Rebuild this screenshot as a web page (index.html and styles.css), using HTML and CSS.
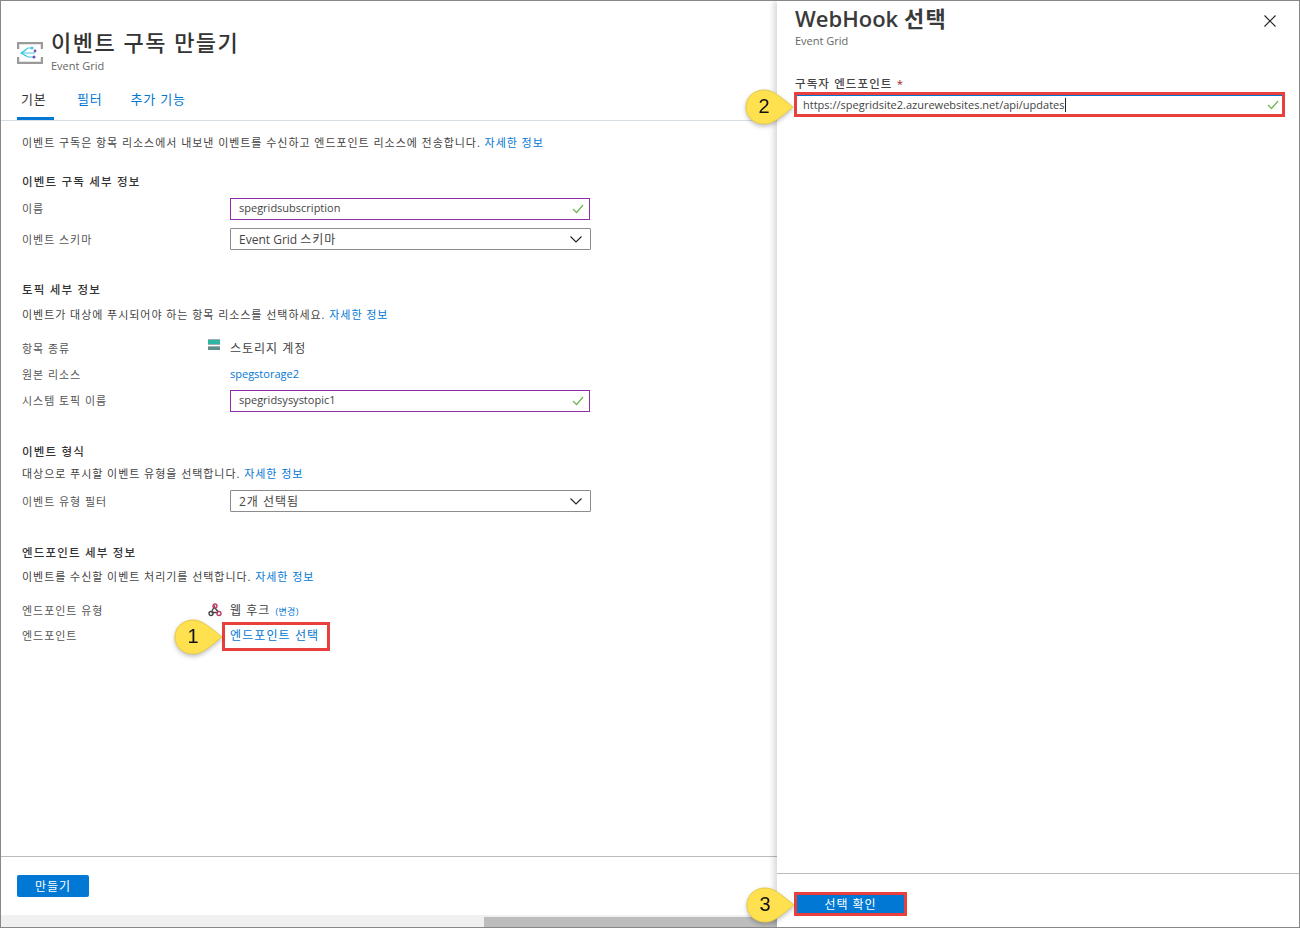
FILE: index.html
```html
<!DOCTYPE html>
<html lang="ko">
<head>
<meta charset="utf-8">
<title>이벤트 구독 만들기</title>
<link rel="stylesheet" href="styles.css">
</head>
<body>
<div class="page">
  <section class="blade">
    <header class="blade-head">
      <svg class="grid-icon" width="26" height="22" viewBox="0 0 26 22">
        <path d="M1 7V1h24v6M1 15v6h24v-6" fill="none" stroke="#9a9a9a" stroke-width="2.4"/>
        <path d="M4 11l7-5h4M4 11h14M4 11l7 4h6M9 8l-5 3 5 3" fill="none" stroke="#3cc9e0" stroke-width="1.2"/>
        <circle cx="15" cy="6" r="1.5" fill="#3cc9e0"/>
        <circle cx="18" cy="9" r="1.4" fill="#7a4db5"/>
        <circle cx="17" cy="15" r="1.5" fill="#7a4db5"/>
      </svg>
      <div>
        <h1 class="title">이벤트 구독 만들기</h1>
        <div class="subtitle">Event Grid</div>
      </div>
    </header>

    <nav class="tabs">
      <span class="tab active">기본</span>
      <a class="tab">필터</a>
      <a class="tab">추가 기능</a>
    </nav>

    <div class="content">
      <p class="intro">이벤트 구독은 항목 리소스에서 내보낸 이벤트를 수신하고 엔드포인트 리소스에 전송합니다. <a>자세한 정보</a></p>

      <h2 class="sec sec-1">이벤트 구독 세부 정보</h2>
      <div class="row r-name">
        <label>이름</label>
        <div class="field valid">spegridsubscription<svg class="check" width="12" height="10" viewBox="0 0 12 10"><path d="M1 5l3.5 3.5L11 1" fill="none" stroke="#6fb552" stroke-width="1.2"/></svg></div>
      </div>
      <div class="row r-next">
        <label>이벤트 스키마</label>
        <div class="field select">Event Grid <span class="ko">스키마</span><svg class="chev" width="12" height="7" viewBox="0 0 12 7"><path d="M.5.5L6 6 11.5.5" fill="none" stroke="#222" stroke-width="1.1"/></svg></div>
      </div>

      <h2 class="sec sec-2">토픽 세부 정보</h2>
      <p class="desc">이벤트가 대상에 푸시되어야 하는 항목 리소스를 선택하세요. <a>자세한 정보</a></p>
      <div class="row r-type">
        <label>항목 종류</label>
        <div class="value with-icon">
          <svg class="side-icon" width="12" height="11" viewBox="0 0 12 11">
            <rect width="12" height="11" fill="#a0aeb2"/>
            <rect y="1" width="12" height="4" fill="#2fb5a4"/>
            <rect y="6" width="12" height="1" fill="#fff"/>
            <rect y="8" width="12" height="3" fill="#5f8f8c"/>
          </svg>
          <span class="ko">스토리지 계정</span>
        </div>
      </div>
      <div class="row r-src">
        <label>원본 리소스</label>
        <a class="value latin">spegstorage2</a>
      </div>
      <div class="row r-topic">
        <label>시스템 토픽 이름</label>
        <div class="field valid">spegridsysystopic1<svg class="check" width="12" height="10" viewBox="0 0 12 10"><path d="M1 5l3.5 3.5L11 1" fill="none" stroke="#6fb552" stroke-width="1.2"/></svg></div>
      </div>

      <h2 class="sec sec-3">이벤트 형식</h2>
      <p class="desc tight">대상으로 푸시할 이벤트 유형을 선택합니다. <a>자세한 정보</a></p>
      <div class="row r-filter">
        <label>이벤트 유형 필터</label>
        <div class="field select"><span class="ko">2개 선택됨</span><svg class="chev" width="12" height="7" viewBox="0 0 12 7"><path d="M.5.5L6 6 11.5.5" fill="none" stroke="#222" stroke-width="1.1"/></svg></div>
      </div>

      <h2 class="sec sec-4">엔드포인트 세부 정보</h2>
      <p class="desc snug">이벤트를 수신할 이벤트 처리기를 선택합니다. <a>자세한 정보</a></p>
      <div class="row r-etype">
        <label>엔드포인트 유형</label>
        <div class="value with-icon">
          <svg class="side-icon hook" width="14" height="14" viewBox="0 0 14 14">
            <path d="M7 2.5L4 8M9.5 9.5H3.5M5.5 3.5L10.5 9" fill="none" stroke="#444" stroke-width="1.4"/>
            <circle cx="7" cy="3" r="2" fill="none" stroke="#c0396b" stroke-width="1.4"/>
            <circle cx="3" cy="10.5" r="2" fill="none" stroke="#444" stroke-width="1.4"/>
            <circle cx="11" cy="10.5" r="2" fill="none" stroke="#c0396b" stroke-width="1.4"/>
          </svg>
          <span class="ko">웹 후크</span>
          <a class="change">(변경)</a>
        </div>
      </div>
      <div class="row r-end">
        <label>엔드포인트</label>
        <a class="value pick">엔드포인트 선택</a>
      </div>
    </div>

    <footer class="blade-foot">
      <button class="btn">만들기</button>
    </footer>
    <div class="scroll"><div class="thumb"></div></div>
  </section>

  <aside class="panel">
    <header class="panel-head">
      <div>
        <h1 class="panel-title">WebHook <span class="title-ko">선택</span></h1>
        <div class="subtitle panel-sub">Event Grid</div>
      </div>
      <svg class="close" width="12" height="12" viewBox="0 0 12 12"><path d="M.5.5l11 11M11.5.5l-11 11" fill="none" stroke="#222" stroke-width="1.1"/></svg>
    </header>
    <div class="panel-body">
      <label class="panel-label">구독자 엔드포인트 <span class="req">*</span></label>
      <div class="url-box">
        <span class="url">https://spegridsite2.azurewebsites.net/api/updates</span><span class="caret"></span>
        <svg class="check" width="12" height="10" viewBox="0 0 12 10"><path d="M1 5l3.5 3.5L11 1" fill="none" stroke="#6fb552" stroke-width="1.2"/></svg>
      </div>
    </div>
    <footer class="panel-foot">
      <button class="btn btn-ok">선택 확인</button>
    </footer>
  </aside>

  <!-- red marker + numbered callouts sit over the screenshot -->
  <div class="redbox box-end"></div>
  <div class="callout c1"><svg width="52" height="38" viewBox="0 0 52 38"><path d="M2 19C2 9 10 2 20 2c8 0 13 4 29 17C33 32 28 36 20 36 10 36 2 29 2 19z" fill="#ffe04f" stroke="#e3c94a"/></svg><span>1</span></div>
  <div class="callout c2"><svg width="52" height="38" viewBox="0 0 52 38"><path d="M2 19C2 9 10 2 20 2c8 0 13 4 29 17C33 32 28 36 20 36 10 36 2 29 2 19z" fill="#ffe04f" stroke="#e3c94a"/></svg><span>2</span></div>
  <div class="callout c3"><svg width="52" height="38" viewBox="0 0 52 38"><path d="M2 19C2 9 10 2 20 2c8 0 13 4 29 17C33 32 28 36 20 36 10 36 2 29 2 19z" fill="#ffe04f" stroke="#e3c94a"/></svg><span>3</span></div>
</div>
</body>
</html>
```
FILE: styles.css
```css
* {
  box-sizing: border-box;
}

html, body {
  margin: 0;
  height: 100%;
}

body {
  font-family: "Open Sans", "Noto Sans CJK KR", sans-serif;
  font-size: 11px;
  color: #444;
  background: #fff;
}

a {
  color: #0078d4;
}

p, h1, h2 {
  margin: 0;
}

.page {
  position: relative;
  display: flex;
  width: 1300px;
  height: 928px;
  border: 1px solid #888;
  overflow: hidden;
}

/* left blade */
.blade {
  width: 776px;
  display: flex;
  flex-direction: column;
}

.blade-head {
  display: flex;
  align-items: flex-start;
  padding: 26px 0 0 16px;
  height: 82px;
}

.grid-icon {
  margin: 15px 8px 0 0;
}

.title {
  font-size: 22px;
  line-height: 30px;
  font-weight: 500;
  color: #333;
  letter-spacing: 1.5px;
}

.subtitle {
  font-size: 11px;
  line-height: 16px;
  margin-top: 1px;
  color: #666;
}

.panel-sub {
  margin-top: 0;
}

.tabs {
  display: flex;
  height: 38px;
  padding-left: 16px;
  border-bottom: 1px solid #d5dde3;
}

.tab {
  height: 36px;
  padding-top: 6px;
  margin-right: 28px;
  font-size: 13px;
  line-height: 20px;
  color: #0078d4;
  letter-spacing: 0.8px;
}

.tab.active {
  width: 37px;
  height: 37px;
  margin-right: 23px;
  padding-left: 4px;
  color: #333;
  border-bottom: 3px solid #0078d4;
}

.content {
  flex: 1;
  padding: 14px 0 0 21px;
}

.intro, .desc, .row label {
  letter-spacing: 0.95px;
}

.intro, .desc {
  line-height: 16px;
}

.ko {
  letter-spacing: 1px;
}

.sec {
  font-size: 11.5px;
  line-height: 16px;
  font-weight: 500;
  color: #333;
  letter-spacing: 1.2px;
}

.sec-1 { margin-top: 23px; }
.sec-2 { margin-top: 32px; }
.sec-3 { margin-top: 32px; }
.sec-4 { margin-top: 33px; }

.desc {
  margin-top: 9px;
}

.desc.tight {
  margin-top: 6px;
}

.desc.snug {
  margin-top: 8px;
}

.row {
  display: grid;
  grid-template-columns: 208px 361px;
  align-items: center;
}

.row label {
  color: #555;
}

.r-name label, .r-topic label, .value.latin {
  padding-bottom: 2px;
}

.r-name { margin-top: 8px; }
.r-next { margin-top: 8px; }
.r-type { margin-top: 14px; height: 22px; }
.r-src { margin-top: 4px; height: 22px; }
.r-topic { margin-top: 5px; }
.r-filter { margin-top: 8px; }
.r-etype { margin-top: 14px; height: 22px; }
.r-end { margin-top: 3px; height: 22px; }

.field {
  position: relative;
  height: 22px;
  padding-left: 8px;
  line-height: 18px;
  border: 1px solid #8c8c8c;
  color: #444;
}

.field.valid {
  width: 360px;
  border-color: #8f2da8;
}

.field.select {
  font-size: 12px;
  line-height: 21px;
  border-radius: 1px;
}

.field .check {
  position: absolute;
  right: 5px;
  top: 5px;
}

.chev {
  position: absolute;
  right: 8px;
  top: 7px;
}

.value {
  display: block;
  font-size: 11px;
}

.value.pick {
  font-size: 12px;
  letter-spacing: 1.1px;
}

.with-icon {
  position: relative;
  font-size: 12px;
  color: #444;
}

.side-icon {
  position: absolute;
  left: -22px;
  top: 0;
}

.side-icon.hook {
  left: -22px;
  top: 2px;
}

.change {
  font-size: 9px;
  margin-left: 2px;
  letter-spacing: 0.4px;
}

.blade-foot {
  height: 59px;
  border-top: 1px solid #bbb;
  padding: 18px 0 0 16px;
}

.btn {
  display: block;
  height: 22px;
  width: 72px;
  padding: 0;
  border: 0;
  border-radius: 2px;
  background: #0078d4;
  color: #fff;
  font: 12px "Open Sans", "Noto Sans CJK KR", sans-serif;
  letter-spacing: 0.9px;
}

.scroll {
  height: 12px;
  padding-top: 2px;
  background: #f0f0f0;
  display: flex;
  justify-content: flex-end;
}

.thumb {
  width: 293px;
  background: #bdbdbd;
}

/* right panel */
.panel {
  width: 522px;
  display: flex;
  flex-direction: column;
  background: #fff;
  box-shadow: -3px 0 6px rgba(0, 0, 0, 0.16);
  z-index: 1;
}

.panel-head {
  display: flex;
  justify-content: space-between;
  height: 67px;
  padding: 2px 23px 0 18px;
}

.panel-title {
  font-size: 22px;
  line-height: 30px;
  font-weight: 600;
  color: #3a3a3a;
}

.title-ko {
  letter-spacing: 1.5px;
}

.close {
  margin-top: 12px;
}

.panel-body {
  flex: 1;
  padding: 8px 14px 0 17px;
}

.panel-label {
  display: block;
  margin-left: 1px;
  font-size: 11.5px;
  line-height: 16px;
  font-weight: 500;
  color: #444;
  letter-spacing: 1.1px;
}

.req {
  color: #a4262c;
}

.url-box {
  position: relative;
  display: flex;
  align-items: center;
  height: 25px;
  padding-left: 6px;
  border: 3px solid #e8403c;
  box-shadow: inset 0 1px 0 #0078d4;
  color: #444;
}

.url-box .check {
  position: absolute;
  right: 3px;
  top: 5px;
}

.caret {
  width: 1px;
  height: 14px;
  background: #222;
}

.panel-foot {
  height: 54px;
  border-top: 1px solid #bbb;
  padding: 18px 0 0 17px;
}

.btn-ok {
  width: 113px;
  height: 24px;
  border: 3px solid #e8403c;
  border-radius: 0;
}

/* annotations */
.redbox {
  position: absolute;
  left: 221px;
  top: 621px;
  width: 108px;
  height: 29px;
  border: 3px solid #e8403c;
}

.callout {
  position: absolute;
  width: 52px;
  height: 38px;
  z-index: 2;
  filter: drop-shadow(0 2px 2px rgba(0, 0, 0, 0.25));
}

.callout svg {
  display: block;
}

.callout span {
  position: absolute;
  left: 2px;
  top: 3px;
  width: 36px;
  text-align: center;
  font: 20px/30px "Liberation Sans", sans-serif;
  color: #111;
}

.c1 { left: 172px; top: 617px; }
.c2 { left: 743px; top: 87px; }
.c3 { left: 744px; top: 885px; }
```
